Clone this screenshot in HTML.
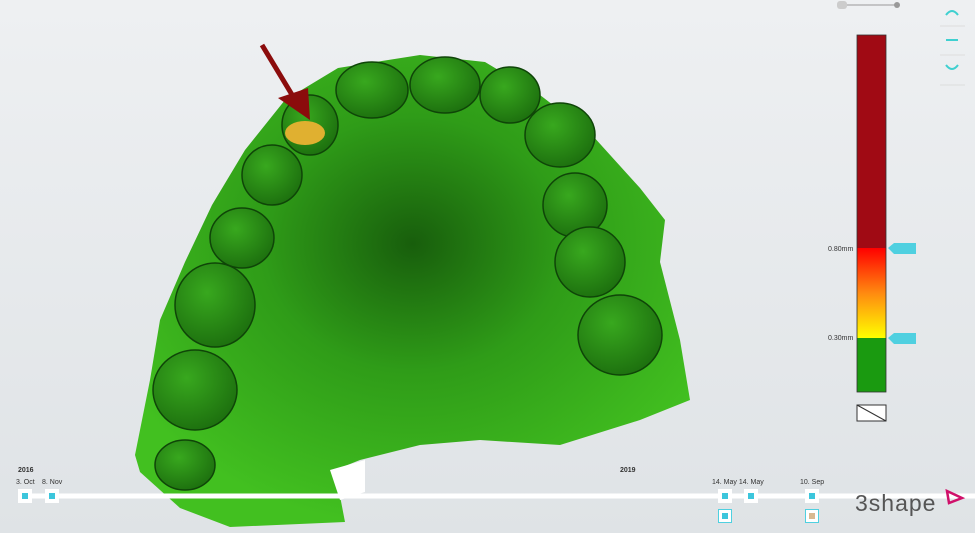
<!DOCTYPE html><html><head><style>
body{margin:0;width:975px;height:533px;overflow:hidden;background:linear-gradient(#eef0f2,#dfe3e6);font-family:"Liberation Sans",sans-serif;position:relative}
.a{position:absolute}
.t{font-size:7px;color:#333}
.sq{position:absolute;width:14px;height:14px;background:#fff;}
.sq i{position:absolute;left:4px;top:4px;width:6px;height:6px;background:#3cc6dc}
</style></head><body>
<svg class="a" style="left:0;top:0" width="975" height="533">
<defs><radialGradient id="g" cx="0.5" cy="0.4" r="0.6"><stop offset="0" stop-color="#185e0c"/><stop offset="0.45" stop-color="#2f9c18"/><stop offset="1" stop-color="#42c020"/></radialGradient>
<radialGradient id="tg" cx="0.4" cy="0.35" r="0.7"><stop offset="0" stop-color="#38a81e"/><stop offset="1" stop-color="#1c6e0e"/></radialGradient></defs>
<path d="M135,455 L150,380 L160,320 L185,262 L212,205 L245,150 L285,100 L338,68 L420,55 L485,62 L540,95 L592,135 L640,188 L665,220 L660,262 L680,340 L690,400 L640,420 L560,445 L480,440 L420,445 L360,460 L335,470 L345,522 L230,527 L180,508 L140,472 Z" fill="url(#g)"/>
<path d="M330,470 L365,460 L365,492 L340,500 Z" fill="#fff"/>
<g fill="url(#tg)" stroke="#0f4508" stroke-width="1.5">
<ellipse cx="372" cy="90" rx="36" ry="28"/><ellipse cx="445" cy="85" rx="35" ry="28"/><ellipse cx="510" cy="95" rx="30" ry="28"/>
<ellipse cx="560" cy="135" rx="35" ry="32"/><ellipse cx="310" cy="125" rx="28" ry="30"/><ellipse cx="272" cy="175" rx="30" ry="30"/>
<ellipse cx="242" cy="238" rx="32" ry="30"/><ellipse cx="215" cy="305" rx="40" ry="42"/><ellipse cx="195" cy="390" rx="42" ry="40"/><ellipse cx="185" cy="465" rx="30" ry="25"/>
<ellipse cx="575" cy="205" rx="32" ry="32"/><ellipse cx="590" cy="262" rx="35" ry="35"/><ellipse cx="620" cy="335" rx="42" ry="40"/>
</g>
<ellipse cx="305" cy="133" rx="20" ry="12" fill="#e0b030"/>
<line x1="262" y1="45" x2="300" y2="108" stroke="#8b0c0c" stroke-width="5"/>
<polygon points="278,98 310,120 308,88" fill="#8b0c0c"/>
<line x1="18" y1="496" x2="975" y2="496" stroke="#fff" stroke-width="5"/>
<line x1="838" y1="5" x2="898" y2="5" stroke="#999" stroke-width="1"/><circle cx="897" cy="5" r="3" fill="#999"/><rect x="837" y="1" width="10" height="8" rx="3" fill="#ccc"/>
<path d="M946,15 Q952,7 958,15" fill="none" stroke="#3fd0d0" stroke-width="2"/>
<line x1="946" y1="40" x2="958" y2="40" stroke="#3fd0d0" stroke-width="2"/>
<path d="M946,65 Q952,73 958,65" fill="none" stroke="#3fd0d0" stroke-width="2"/>
<line x1="940" y1="26" x2="965" y2="26" stroke="#ddd"/><line x1="940" y1="55" x2="965" y2="55" stroke="#ddd"/><line x1="940" y1="85" x2="965" y2="85" stroke="#ddd"/>
<defs><linearGradient id="s" x1="0" y1="0" x2="0" y2="1"><stop offset="0" stop-color="#f00"/><stop offset="0.5" stop-color="#ff8a10"/><stop offset="1" stop-color="#ffff00"/></linearGradient></defs>
<rect x="857" y="35" width="29" height="213" fill="#a00a14"/><rect x="857" y="248" width="29" height="90" fill="url(#s)"/><rect x="857" y="338" width="29" height="54" fill="#1a9a10"/>
<rect x="857" y="35" width="29" height="357" fill="none" stroke="#333" stroke-width="0.8"/>
<rect x="857" y="405" width="29" height="16" fill="#fff" stroke="#333"/><line x1="857" y1="405" x2="886" y2="421" stroke="#333"/>
<polygon points="888,248 894,243 916,243 916,254 894,254" fill="#4fd0e0"/>
<polygon points="888,338 894,333 916,333 916,344 894,344" fill="#4fd0e0"/>
</svg>
<div class="a t" style="left:828px;top:246px">0.80mm</div>
<div class="a t" style="left:828px;top:335px">0.30mm</div>
<div class="a t" style="left:18px;top:467px;font-weight:bold">2016</div>
<div class="a t" style="left:620px;top:467px;font-weight:bold">2019</div>
<div class="a t" style="left:16px;top:479px">3. Oct</div><div class="a t" style="left:42px;top:479px">8. Nov</div>
<div class="a t" style="left:712px;top:479px">14. May 14. May</div><div class="a t" style="left:800px;top:479px">10. Sep</div>
<div class="sq" style="left:18px;top:489px"><i></i></div><div class="sq" style="left:45px;top:489px"><i></i></div>
<div class="sq" style="left:718px;top:489px"><i></i></div><div class="sq" style="left:744px;top:489px"><i></i></div><div class="sq" style="left:805px;top:489px"><i></i></div>
<div class="sq" style="left:718px;top:509px;border:1px solid #4fd0e0;width:12px;height:12px"><i style="left:3px;top:3px"></i></div>
<div class="sq" style="left:805px;top:509px;border:1px solid #4fd0e0;width:12px;height:12px"><i style="left:3px;top:3px;background:#d8b890"></i></div>
<div class="a" style="left:855px;top:490px;font-size:23px;color:#555;letter-spacing:1px">3shape</div>
<svg class="a" style="left:944px;top:488px" width="22" height="18"><polygon points="3,3 18,10 5,15" fill="none" stroke="#d0106a" stroke-width="2.5"/></svg>
</body></html>
